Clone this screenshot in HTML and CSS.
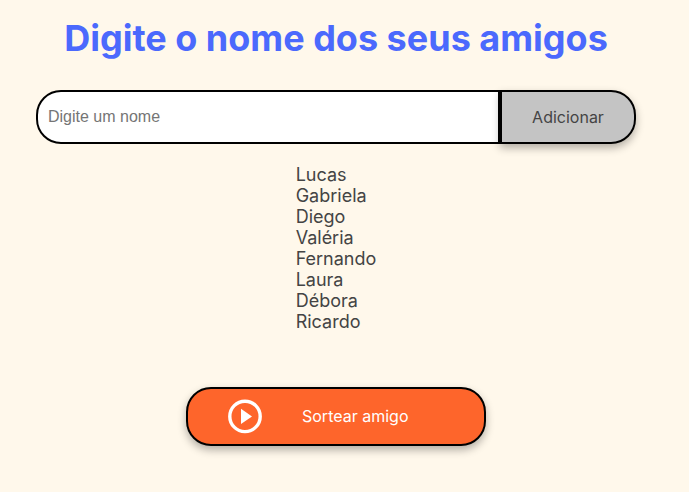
FILE: index.html
```html
<!DOCTYPE html>
<html lang="pt-BR">
<head>
<meta charset="UTF-8">
<meta name="viewport" content="width=device-width, initial-scale=1.0">
<title>Amigo Secreto</title>
<link rel="stylesheet" href="styles.css">
</head>
<body>
<main class="input-section">
  <h1 class="section-title">Digite o nome dos seus amigos</h1>
  <div class="input-wrapper">
    <input type="text" class="input-name" aria-label="Nome do amigo" placeholder="Digite um nome">
    <button type="button" class="button-add">Adicionar</button>
  </div>
  <ul class="name-list">
    <li>Lucas</li>
    <li>Gabriela</li>
    <li>Diego</li>
    <li>Valéria</li>
    <li>Fernando</li>
    <li>Laura</li>
    <li>Débora</li>
    <li>Ricardo</li>
  </ul>
  <button type="button" class="button-draw">
    <svg class="play-icon" viewBox="0 0 40 40" aria-hidden="true">
      <circle cx="20" cy="20.4" r="15.2" fill="none" stroke="currentColor" stroke-width="3.4"/>
      <path d="M16 12.7v15.4L27 20.4z" fill="currentColor"/>
    </svg>
    <span>Sortear amigo</span>
  </button>
</main>
</body>
</html>
```
FILE: styles.css
```css
* {
  box-sizing: border-box;
  margin: 0;
  padding: 0;
}

body {
  background: #fff8eb;
  color: #444;
  font-family: Inter, sans-serif;
}

.input-section {
  display: flex;
  flex-direction: column;
  align-items: center;
  padding: 16px 53px 46px 36px;
}

.section-title {
  color: #4b69fd;
  font-size: 36px;
  font-weight: 700;
  line-height: 44px;
  white-space: nowrap;
}

.input-wrapper {
  display: flex;
  width: 100%;
  max-width: 600px;
  margin-top: 30px;
}

.input-name {
  flex: 1;
  min-width: 0;
  height: 54px;
  padding: 10px;
  border: 2px solid #000;
  border-radius: 25px 0 0 25px;
  background: #fff;
  font: 16px "Liberation Sans", Arial, sans-serif;
}

.button-add {
  width: 136px;
  border: 2px solid #000;
  border-radius: 0 25px 25px 0;
  background: #c4c4c4;
  color: #444;
  font: 16px Inter, sans-serif;
  box-shadow: 0 4px 8px rgba(0, 0, 0, 0.3);
}

.name-list {
  margin-top: 20px;
  list-style: none;
  font-size: 18px;
  line-height: 21px;
}

.button-draw {
  display: flex;
  align-items: center;
  gap: 37px;
  width: 300px;
  max-width: 100%;
  margin-top: 55px;
  padding: 7px 37px 8px;
  border: 2px solid #000;
  border-radius: 25px;
  background: #fe652b;
  color: #fff;
  font: 16px Inter, sans-serif;
  box-shadow: 0 4px 8px rgba(0, 0, 0, 0.3);
}

.play-icon {
  width: 40px;
  height: 40px;
}
```
